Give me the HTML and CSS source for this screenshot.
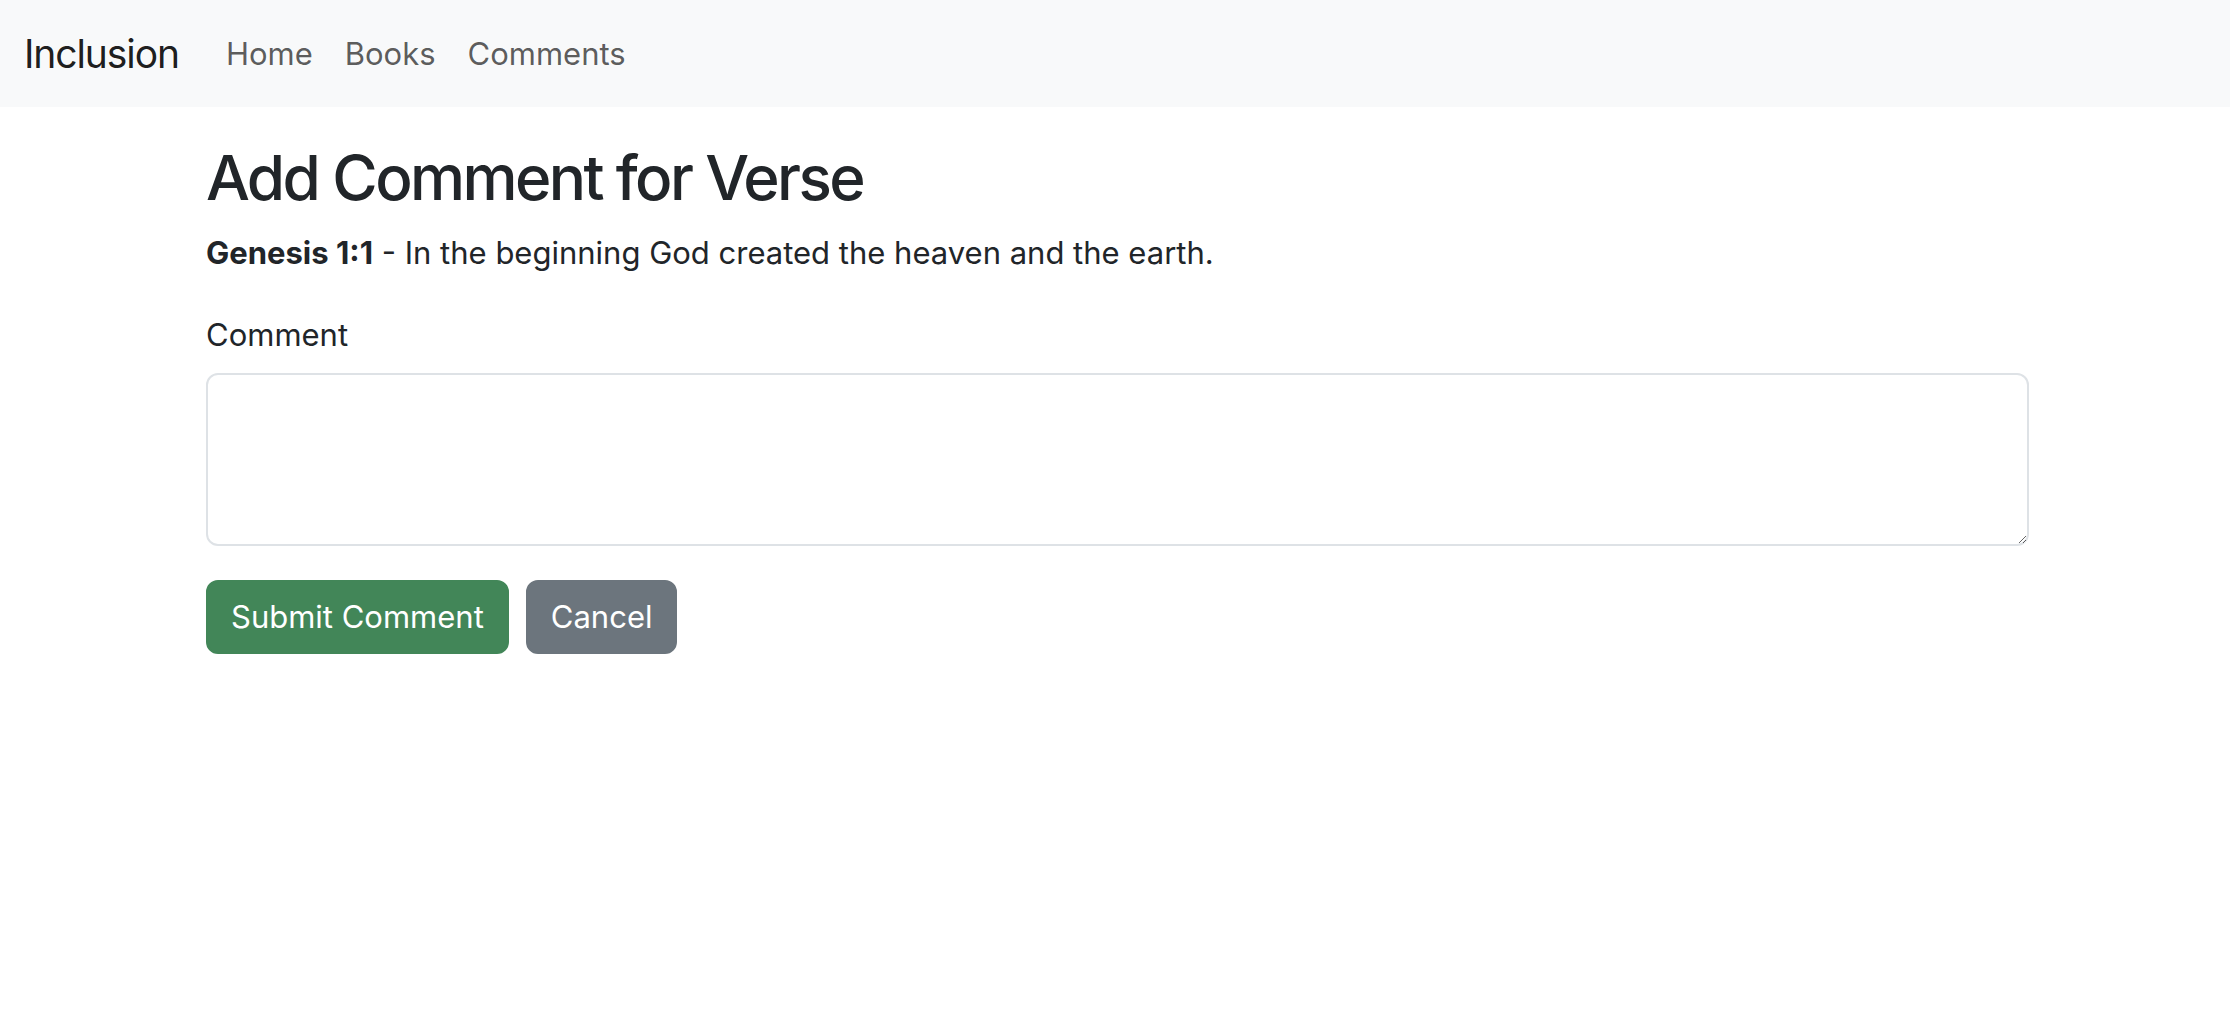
FILE: index.html
```html
<!DOCTYPE html>
<html lang="en">
<head>
<meta charset="utf-8">
<title>Add Comment</title>
<link rel="stylesheet" href="styles.css">
</head>
<body>
<nav class="navbar">
  <a class="brand" href="#">Inclusion</a>
  <ul class="nav">
    <li><a class="nav-link" href="#">Home</a></li>
    <li><a class="nav-link" href="#">Books</a></li>
    <li><a class="nav-link" href="#">Comments</a></li>
  </ul>
</nav>
<main class="container">
  <h2 class="title">Add Comment for Verse</h2>
  <p class="verse"><strong>Genesis 1:1</strong> - In the beginning God created the heaven and the earth.</p>
  <form class="form">
    <label class="form-label" for="comment">Comment</label>
    <textarea id="comment" class="form-control" rows="3"></textarea>
    <div class="actions">
      <button type="submit" class="btn btn-success">Submit Comment</button>
      <a href="#" class="btn btn-secondary">Cancel</a>
    </div>
  </form>
</main>
</body>
</html>
```
FILE: styles.css
```css
* { box-sizing: border-box; }
html, body { margin: 0; padding: 0; }
body {
  font-family: Inter, "Liberation Sans", sans-serif;
  font-size: 31px;
  line-height: 1.5;
  color: #212529;
  background: #fff;
}
.navbar {
  display: flex;
  align-items: center;
  height: 107px;
  padding: 0 24px;
  background: #f8f9fa;
}
.brand {
  font-size: 39px;
  line-height: 58px;
  letter-spacing: -1.1px;
  color: rgba(0,0,0,0.9);
  text-decoration: none;
  margin-right: 31px;
}
.nav {
  display: flex;
  list-style: none;
  margin: 0;
  padding: 0;
}
.nav-link {
  display: block;
  padding: 8px 16px;
  font-size: 31px;
  line-height: 46px;
  color: rgba(0,0,0,0.65);
  text-decoration: none;
}
.container {
  width: 1823px;
  margin: 34px 0 0 206px;
}
.title {
  margin: 0 0 15px;
  font-size: 62px;
  font-weight: 500;
  line-height: 1.2;
  letter-spacing: -2.6px;
}
.verse {
  margin: 0 0 35px;
}
.verse strong { font-weight: 700; }
.form { display: flex; flex-direction: column; align-items: flex-start; }
.form-label {
  display: block;
  margin-bottom: 15px;
}
.form-control {
  display: block;
  width: 100%;
  height: 173px;
  padding: 12px 23px;
  font: inherit;
  border: 2px solid #dee2e6;
  border-radius: 12px;
  margin-bottom: 34px;
  resize: vertical;
}
.actions { display: flex; gap: 17px; }
.btn {
  display: inline-block;
  padding: 12px 23px;
  font-family: inherit;
  font-size: 31px;
  line-height: 46px;
  border: 2px solid transparent;
  border-radius: 12px;
  color: #fff;
  text-decoration: none;
  cursor: pointer;
}
.btn-success { background: #428658; border-color: #428658; }
.btn-secondary { background: #6c757d; border-color: #6c757d; }
```
